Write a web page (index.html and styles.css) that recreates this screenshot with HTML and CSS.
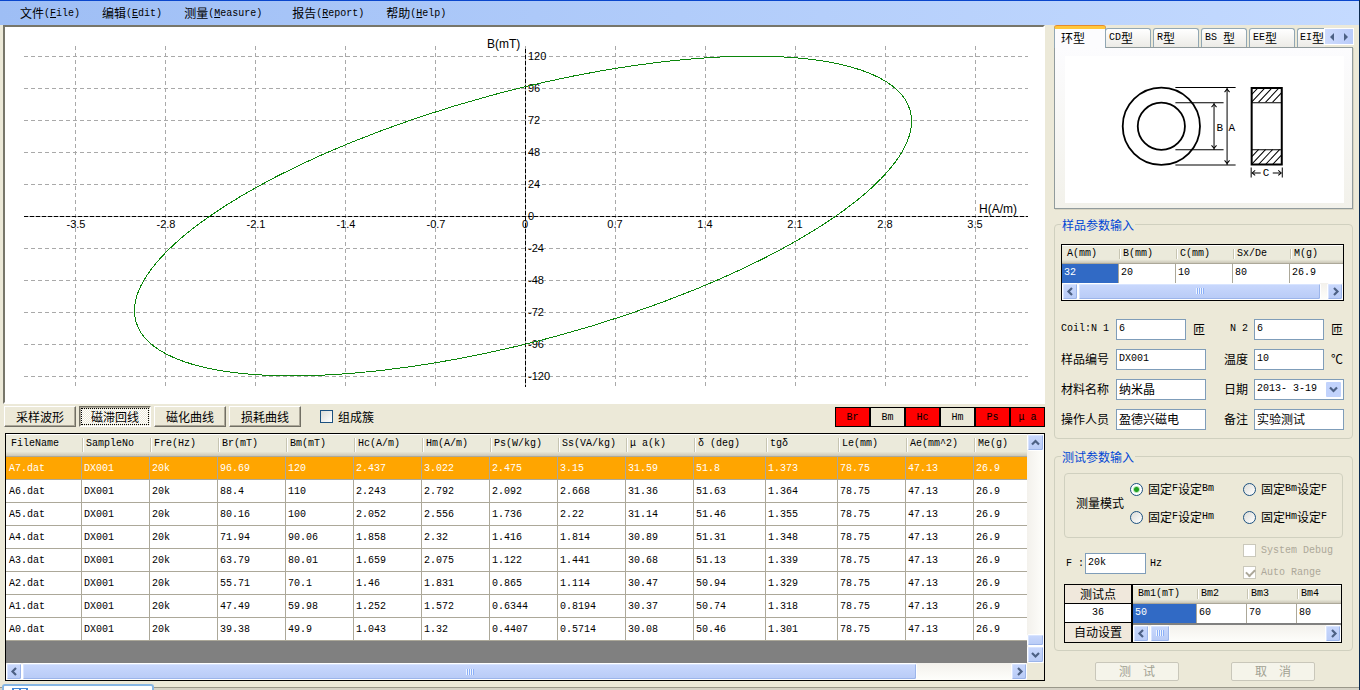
FILE: index.html
```html
<!DOCTYPE html>
<html lang="zh-CN">
<head>
<meta charset="utf-8">
<title>磁滞回线</title>
<link rel="stylesheet" href="styles.css">
</head>
<body>
<svg class="defs" aria-hidden="true">
  <symbol id="left" viewBox="0 0 9 9"><path d="M6 1 2.5 4.500 6 8" fill="none" stroke="#4d6185" stroke-width="2.200"/></symbol>
  <symbol id="right" viewBox="0 0 9 9"><path d="M3 1 6.500 4.500 3 8" fill="none" stroke="#4d6185" stroke-width="2.200"/></symbol>
  <symbol id="up" viewBox="0 0 9 9"><path d="M1 6.500 4.500 3 8 6.500" fill="none" stroke="#4d6185" stroke-width="2.200"/></symbol>
  <symbol id="down" viewBox="0 0 9 9"><path d="M1 3 4.500 6.500 8 3" fill="none" stroke="#4d6185" stroke-width="2.200"/></symbol>
  <symbol id="grip" viewBox="0 0 8 6"><path d="M.5 0v6M2.500 0v6M4.500 0v6M6.500 0v6" stroke="#eef4fe"/><path d="M1.500 0v6M3.500 0v6M5.500 0v6M7.500 0v6" stroke="#8cb0f8"/></symbol>
</svg>
<div class="window">
  <nav class="menubar">
    <button>文件<span>(<u>F</u>ile)</span></button>
    <button>编辑<span>(<u>E</u>dit)</span></button>
    <button class="wide">测量<span>(<u>M</u>easure)</span></button>
    <button>报告<span>(<u>R</u>eport)</span></button>
    <button>帮助<span>(<u>H</u>elp)</span></button>
  </nav>
  <div class="body">
    <main class="left">
      <div class="chart">
        <svg viewBox="5 27 1038 375" role="img" aria-label="B-H">
          <g class="grid">
            <path d="M24 56.500H1028M24 88.500H1028M24 120.500H1028M24 152.500H1028M24 184.500H1028M24 248.500H1028M24 280.500H1028M24 312.500H1028M24 344.500H1028M24 376.500H1028"/>
            <path d="M75.500 46V386M165.500 46V386M255.500 46V386M345.500 46V386M435.500 46V386M615.500 46V386M705.500 46V386M795.500 46V386M885.500 46V386M975.500 46V386"/>
            <path d="M24 216.500H1028M525.500 46V386" class="under"/>
          </g>
          <path class="axis" d="M24 216.500H1028M525.500 49V387"/>
          <g class="ticks">
            <text x="528" y="60">120</text><text x="528" y="92">96</text><text x="528" y="124">72</text><text x="528" y="156">48</text><text x="528" y="188">24</text><text x="528" y="220">0</text><text x="528" y="252">-24</text><text x="528" y="284">-48</text><text x="528" y="316">-72</text><text x="528" y="348">-96</text><text x="528" y="380">-120</text>
          </g>
          <g class="ticks mid">
            <text x="76" y="228">-3.5</text><text x="166" y="228">-2.8</text><text x="256" y="228">-2.1</text><text x="346" y="228">-1.4</text><text x="436" y="228">-0.7</text><text x="525" y="228">0</text><text x="615" y="228">0.7</text><text x="705" y="228">1.4</text><text x="795" y="228">2.1</text><text x="885" y="228">2.8</text><text x="975" y="228">3.5</text>
          </g>
          <text class="name" x="487" y="48">B(mT)</text>
          <text class="name" x="979" y="213">H(A/m)</text>
          <ellipse class="loop" cx="523" cy="216" rx="401.200" ry="124.700" transform="rotate(-15.210 523 216)"/>
        </svg>
      </div>
      <div class="toolbar">
        <button>采样波形</button><button class="pressed">磁滞回线</button><button>磁化曲线</button><button>损耗曲线</button>
        <label class="check cluster"><input type="checkbox">组成簇</label>
        <div class="legend"><button class="on">Br</button><button>Bm</button><button class="on">Hc</button><button>Hm</button><button class="on">Ps</button><button class="on">μ a</button></div>
      </div>
      <div class="datagrid">
        <div class="rows">
          <table>
            <colgroup><col class="c76"><col span="9" class="c68"><col span="2" class="c72"><col span="2" class="c68"><col></colgroup>
            <thead><tr><th>FileName</th><th>SampleNo</th><th>Fre(Hz)</th><th>Br(mT)</th><th>Bm(mT)</th><th>Hc(A/m)</th><th>Hm(A/m)</th><th>Ps(W/kg)</th><th>Ss(VA/kg)</th><th>μ a(k)</th><th>δ (deg)</th><th>tgδ</th><th>Le(mm)</th><th>Ae(mm^2)</th><th>Me(g)</th></tr></thead>
            <tbody>
              <tr class="selected"><td>A7.dat</td><td>DX001</td><td>20k</td><td>96.69</td><td>120</td><td>2.437</td><td>3.022</td><td>2.475</td><td>3.15</td><td>31.59</td><td>51.8</td><td>1.373</td><td>78.75</td><td>47.13</td><td>26.9</td></tr>
              <tr><td>A6.dat</td><td>DX001</td><td>20k</td><td>88.4</td><td>110</td><td>2.243</td><td>2.792</td><td>2.092</td><td>2.668</td><td>31.36</td><td>51.63</td><td>1.364</td><td>78.75</td><td>47.13</td><td>26.9</td></tr>
              <tr><td>A5.dat</td><td>DX001</td><td>20k</td><td>80.16</td><td>100</td><td>2.052</td><td>2.556</td><td>1.736</td><td>2.22</td><td>31.14</td><td>51.46</td><td>1.355</td><td>78.75</td><td>47.13</td><td>26.9</td></tr>
              <tr><td>A4.dat</td><td>DX001</td><td>20k</td><td>71.94</td><td>90.06</td><td>1.858</td><td>2.32</td><td>1.416</td><td>1.814</td><td>30.89</td><td>51.31</td><td>1.348</td><td>78.75</td><td>47.13</td><td>26.9</td></tr>
              <tr><td>A3.dat</td><td>DX001</td><td>20k</td><td>63.79</td><td>80.01</td><td>1.659</td><td>2.075</td><td>1.122</td><td>1.441</td><td>30.68</td><td>51.13</td><td>1.339</td><td>78.75</td><td>47.13</td><td>26.9</td></tr>
              <tr><td>A2.dat</td><td>DX001</td><td>20k</td><td>55.71</td><td>70.1</td><td>1.46</td><td>1.831</td><td>0.865</td><td>1.114</td><td>30.47</td><td>50.94</td><td>1.329</td><td>78.75</td><td>47.13</td><td>26.9</td></tr>
              <tr><td>A1.dat</td><td>DX001</td><td>20k</td><td>47.49</td><td>59.98</td><td>1.252</td><td>1.572</td><td>0.6344</td><td>0.8194</td><td>30.37</td><td>50.74</td><td>1.318</td><td>78.75</td><td>47.13</td><td>26.9</td></tr>
              <tr><td>A0.dat</td><td>DX001</td><td>20k</td><td>39.38</td><td>49.9</td><td>1.043</td><td>1.32</td><td>0.4407</td><td>0.5714</td><td>30.08</td><td>50.46</td><td>1.301</td><td>78.75</td><td>47.13</td><td>26.9</td></tr>
            </tbody>
          </table>
        </div>
        <div class="bar vertical"><button class="knob" aria-label="上"><svg><use href="#up"/></svg></button><span class="space"></span><span class="knob small"></span><button class="knob" aria-label="下"><svg><use href="#down"/></svg></button></div>
        <div class="bar"><button class="knob" aria-label="左"><svg><use href="#left"/></svg></button><span class="knob thumb most"><svg class="grip"><use href="#grip"/></svg></span><span class="space"></span><button class="knob" aria-label="右"><svg><use href="#right"/></svg></button></div>
      </div>
    </main>
    <aside class="side">
      <div class="tabs">
        <button class="active">环型</button><button><span>CD</span>型</button><button><span>R</span>型</button><button><span>BS </span>型</button><button><span>EE</span>型</button><button class="cut"><span>EI</span>型</button>
        <div class="spin"><button aria-label="前"><svg viewBox="0 0 6 8"><path d="M5 0v8L1 4z" fill="#4d6185"/></svg></button><button aria-label="后"><svg viewBox="0 0 6 8"><path d="M1 0v8l4-4z" fill="#4d6185"/></svg></button></div>
      </div>
      <div class="page">
        <svg viewBox="1065 56 278 146" role="img" aria-label="环型">
          <defs><clipPath id="hatch"><path d="M1251 88h30v14h-30zM1251 149h30v15h-30z"/></clipPath></defs>
          <g fill="none" stroke="#000">
            <circle cx="1161" cy="126" r="38.500" stroke-width="1.800"/>
            <circle cx="1161" cy="126" r="23.500" stroke-width="1.800"/>
            <path d="M1175 87.500h60M1175 102.500h48M1175 149.500h48M1175 164.500h60M1213.500 103v46M1226.500 88v76M1250.500 167v10M1281.500 167v10M1252 172.500h8M1272 172.500h8"/>
            <path d="M1211 107l2.500-3 2.500 3M1211 145l2.500 3 2.500-3M1224 92l2.500-3 2.500 3M1224 160l2.500 3 2.500-3M1254.500 170l-3 2.500 3 2.500M1277.500 170l3 2.500-3 2.500"/>
            <path d="M1251 88h30v76h-30z" stroke-width="2"/>
            <path d="M1251 102.500h30M1251 149.500h30"/>
            <path clip-path="url(#hatch)" d="M1243 103l15-16M1250 103l15-16M1257 103l15-16M1264 103l15-16M1271 103l15-16M1243 165l15-16M1250 165l15-16M1257 165l15-16M1264 165l15-16M1271 165l15-16"/>
          </g>
          <g class="dims"><text x="1216" y="131">B</text><text x="1228" y="131">A</text><text x="1262" y="176">C</text></g>
        </svg>
      </div>

      <fieldset class="sample">
        <legend>样品参数输入</legend>
        <div class="minigrid">
          <table>
            <colgroup><col span="4" class="c57"><col></colgroup>
            <thead><tr><th>A(mm)</th><th>B(mm)</th><th>C(mm)</th><th>Sx/De</th><th>M(g)</th></tr></thead>
            <tbody><tr><td class="cell">32</td><td>20</td><td>10</td><td>80</td><td>26.9</td></tr></tbody>
          </table>
          <div class="bar"><button class="knob" aria-label="左"><svg><use href="#left"/></svg></button><span class="knob thumb fill"><svg class="grip"><use href="#grip"/></svg></span><span class="stub"></span><button class="knob" aria-label="右"><svg><use href="#right"/></svg></button></div>
        </div>
        <div class="form">
          <label class="en" for="n1">Coil:N 1</label><div class="field"><input id="n1" class="short" value="6"><span>匝</span></div>
          <label class="en" for="n2">N 2</label><div class="field"><input id="n2" class="short" value="6"><span>匝</span></div>
          <label for="no">样品编号</label><div class="field"><input id="no" value="DX001"></div>
          <label for="temp">温度</label><div class="field"><input id="temp" class="short" value="10"><span>℃</span></div>
          <label for="mat">材料名称</label><div class="field"><input id="mat" class="cn" value="纳米晶"></div>
          <label for="date">日期</label><div class="field date"><select id="date"><option>2013- 3-19</option></select><svg viewBox="0 0 15 15"><rect width="15" height="15" rx="1" fill="#c2d3fc"/><path d="M4 5.500 7.500 9 11 5.500" fill="none" stroke="#4d6185" stroke-width="2.200"/></svg></div>
          <label for="op">操作人员</label><div class="field"><input id="op" class="cn" value="盈德兴磁电"></div>
          <label for="note">备注</label><div class="field"><input id="note" class="cn" value="实验测试"></div>
        </div>
      </fieldset>

      <fieldset class="test">
        <legend>测试参数输入</legend>
        <div class="mode" role="radiogroup" aria-labelledby="mode">
          <span id="mode">测量模式</span>
          <div class="radios">
            <label><input type="radio" name="m" checked>固定<span>F</span>设定<span>Bm</span></label>
            <label><input type="radio" name="m">固定<span>Bm</span>设定<span>F</span></label>
            <label><input type="radio" name="m">固定<span>F</span>设定<span>Hm</span></label>
            <label><input type="radio" name="m">固定<span>Hm</span>设定<span>F</span></label>
          </div>
        </div>
        <div class="options">
          <label class="en" for="freq">F :</label><input id="freq" value="20k"><span class="en">Hz</span>
          <div class="flags">
            <label class="check off"><input type="checkbox" disabled><span>System Debug</span></label>
            <label class="check off"><input type="checkbox" checked disabled><span>Auto Range</span></label>
          </div>
        </div>
        <div class="points">
          <div class="setup"><span>测试点</span><span class="count">36</span><button>自动设置</button></div>
          <div class="series">
            <table>
              <colgroup><col class="c63"><col span="2" class="c50"><col></colgroup>
              <thead><tr><th>Bm1(mT)</th><th>Bm2</th><th>Bm3</th><th>Bm4</th></tr></thead>
              <tbody><tr><td class="cell">50</td><td>60</td><td>70</td><td>80</td></tr></tbody>
            </table>
            <div class="bar"><button class="knob" aria-label="左"><svg><use href="#left"/></svg></button><span class="knob thumb tiny"><svg class="grip"><use href="#grip"/></svg></span><span class="space"></span><button class="knob" aria-label="右"><svg><use href="#right"/></svg></button></div>
          </div>
        </div>
      </fieldset>
      <div class="actions"><button disabled>测　试</button><button disabled>取　消</button></div>
    </aside>
  </div>
  <footer class="taskbar"><div class="task"><svg viewBox="0 0 16 3"><path d="M0 0h16v3H0z" fill="#3f86d6"/><path d="M2 1h5v2H2zM9 1h5v2H9z" fill="#fff"/></svg></div></footer>
</div>
</body>
</html>
```

FILE: styles.css
```css
:root {
  --cjk: "Noto Sans CJK SC", sans-serif;
  --mono: "Liberation Mono", "Noto Sans CJK SC", monospace;
  --face: #ece9d8;
  --line: #aca899;
  --group: #d0d0bf;
  --field: #7f9db9;
}

* { box-sizing: border-box; }

body {
  margin: 0;
  background: var(--face);
  font: 12px/16px var(--cjk);
  color: #000;
}

button, input, select {
  margin: 0;
  padding: 0;
  border: 0;
  background: none;
  font: inherit;
  color: inherit;
}

.defs { position: absolute; width: 0; height: 0; }

.window {
  display: flex;
  flex-direction: column;
  height: 100vh;
  min-height: 690px;
  overflow: hidden;
  border-right: 1px solid #0a2a50;
}

/* Menu */
.menubar {
  display: flex;
  flex: none;
  gap: 22px;
  height: 25px;
  padding: 0 20px;
  border-top: 1px solid #0a46cc;
  background: linear-gradient(90deg, #9ebef5, #c4daff);
}
.menubar button { display: flex; align-items: center; }
.menubar button > span { padding-top: 2px; }
.menubar .wide { margin-right: 8px; }
.menubar span, .tabs span, .radios span, .check span, .en {
  font-family: var(--mono);
  font-size: 10px;
}

.body { display: flex; flex: 1; min-height: 0; padding: 0 6px 0 3px; gap: 9px; }
.left { flex: 1; min-width: 0; display: flex; flex-direction: column; }
.side { flex: none; width: 299px; padding-top: 1px; }

/* Plot */
.chart {
  border: 2px solid;
  border-color: #77766a #fff #fff #77766a;
  background: #fff;
}
.chart svg { display: block; width: 100%; height: auto; }
.grid path { fill: none; stroke: #a9a9a9; stroke-dasharray: 4 3; shape-rendering: crispEdges; }
.grid .under { stroke-dasharray: none; }
.axis { fill: none; stroke: #000; stroke-dasharray: 4 2; shape-rendering: crispEdges; }
.ticks, .name { font-family: "Liberation Sans", Arial, sans-serif; font-size: 11px; fill: #000; }
.name { font-size: 12px; }
.mid { text-anchor: middle; }
.loop { fill: none; stroke: #0b860b; stroke-width: 1; shape-rendering: crispEdges; }

/* Buttons under the plot */
.toolbar { display: flex; align-items: center; gap: 3px; height: 29px; padding-left: 1px; }
.toolbar > button {
  width: 72px;
  height: 21px;
  margin-bottom: 4px;
  border: 1px solid;
  border-color: #fff #716f64 #716f64 #fff;
  box-shadow: inset -1px -1px var(--line);
  line-height: 17px;
}
.toolbar .pressed {
  background: repeating-conic-gradient(#fff 0 25%, #ece9d8 0 50%) 0 0 / 2px 2px;
  border-color: #716f64 #fff #fff #716f64;
  box-shadow: inset 1px 1px var(--line);
  outline: 1px dotted #000;
  outline-offset: -3px;
  line-height: 15px;
}
.check { display: flex; align-items: center; gap: 5px; }
.check input, .radios input {
  appearance: none;
  flex: none;
  width: 13px;
  height: 13px;
  border: 1px solid #1c5180;
  background: linear-gradient(135deg, #dcdcd7, #fff);
}
.cluster { margin: 0 0 4px 16px; }
.legend { display: flex; margin: 0 0 4px auto; }
.legend button {
  width: 35px;
  height: 20px;
  margin-top: 1px;
  padding-top: 2px;
  border: 1px solid #000;
  font: 10px/14px var(--mono);
}
.legend .on { background: #f00; }

/* Tables */
table { width: 100%; border-collapse: separate; border-spacing: 0; table-layout: fixed; font: 10px/14px var(--mono); }
.c76 { width: 76px; }
.c72 { width: 72px; }
.c68 { width: 68px; }
.c63 { width: 64px; }
.c57 { width: 57px; }
.c50 { width: 50px; }
th, td { overflow: hidden; white-space: nowrap; text-align: left; font-weight: normal; }
th {
  position: relative;
  height: 19px;
  padding: 0 0 0 5px;
  border-bottom: 1px solid var(--line);
  background: linear-gradient(#fff 0 1px, #ebeadb 1px 80%, #cbc7b8);
}
th + th { padding-left: 4px; }
th + th::before {
  content: "";
  position: absolute;
  left: 0;
  top: 4px;
  bottom: 4px;
  width: 2px;
  background: linear-gradient(90deg, #c7c5b2 50%, #fff 50%);
}
td { height: 19px; padding: 0 0 0 2px; border-right: 1px solid var(--line); background: #fff; }
td:last-child { border-right: 0; }
td.cell { background: #316ac5; color: #fff; }

.datagrid {
  display: grid;
  flex: 1;
  grid-template: minmax(0, 1fr) 17px / minmax(0, 1fr) 17px;
  min-height: 0;
  margin: 0 0 0 2px;
  border: 1px solid #000;
}
.rows { background: #808080; overflow: hidden; }
.rows th { height: 23px; padding-bottom: 2px; }
.rows td { height: 23px; padding-top: 1px; border-bottom: 1px solid var(--line); }
.rows td:first-child { padding-left: 3px; }
.selected td { background: #ffa500; color: #fff; }

/* Scroll bars */
.bar { display: flex; height: 17px; background: linear-gradient(#f3f1ec, #fefefb); }
.vertical { flex-direction: column; width: 17px; height: auto; background: linear-gradient(90deg, #f3f1ec, #fefefb); }
.knob {
  display: flex;
  flex: none;
  align-items: center;
  justify-content: center;
  width: 16px;
  height: 17px;
  border: 1px solid #fff;
  border-radius: 2px;
  background: linear-gradient(#c9d8fd, #b8cbf6);
  box-shadow: inset -1px -1px #9cb5ea, inset 1px 1px #d8e4ff;
}
.vertical .knob { width: 17px; }
.knob svg { width: 9px; height: 9px; }
.knob .grip { width: 8px; height: 6px; }
.vertical .small { height: 12px; }
.most { width: 895px; flex-shrink: 1; }
.fill, .space { flex: 1; }
.tiny { width: 20px; margin-left: 1px; }
.stub { width: 6px; }

/* Core shape tabs */
.tabs { display: flex; align-items: flex-end; height: 21px; position: relative; }
.tabs > button {
  display: flex;
  align-items: center;
  flex: none;
  width: 46px;
  height: 19px;
  margin-right: 2px;
  padding-left: 3px;
  border: 1px solid #91a7b4;
  border-bottom: 0;
  border-radius: 3px 3px 0 0;
  background: linear-gradient(#fff, #ecebe6);
  white-space: pre;
}
.tabs > .active {
  width: 52px;
  height: 22px;
  margin: 0 -1px -1px 0;
  padding: 0 0 2px 6px;
  border-top: 3px solid #ffc73c;
  box-shadow: 0 -1px #e68b2c;
  background: #fcfcfe;
  z-index: 1;
}
.tabs > .cut { width: 28px; margin: 0; padding-left: 2px; border-right: 0; border-radius: 3px 0 0 0; }
.spin { display: flex; flex: 1; height: 15px; margin: 0 0 3px; background: linear-gradient(90deg, #cfdcfd, #b9cbfa); box-shadow: 0 0 0 1px #fff; }
.spin button { display: flex; flex: 1; align-items: center; justify-content: center; }
.spin svg { width: 6px; height: 8px; }
.page {
  padding: 8px 8px 5px 10px;
  border: 1px solid #919b9c;
  background: linear-gradient(#fcfcfe, #f2f1ea);
  box-shadow: 1px 1px #d6d3c2;
}
.page svg { display: block; width: 100%; height: auto; background: #fff; }
.dims { font: 11px "Liberation Mono", monospace; }

/* Groups */
fieldset {
  min-width: 0;
  margin: 0;
  padding: 0 8px 0 6px;
  border: 1px solid var(--group);
  border-radius: 4px;
}
legend { padding: 0 1px; color: #0046d5; }
.sample { margin-top: 8px; padding-bottom: 8px; }
.test { margin-top: 10px; padding: 0 9px 7px; }
.test legend { margin-left: -3px; }
.minigrid { margin: 11px 0 18px; border: 1px solid #000; }

.form { display: grid; grid-template-columns: 55px 90px 1fr 90px; row-gap: 9px; align-items: center; }
.form label { white-space: nowrap; }
.form label:nth-of-type(even) { justify-self: end; margin-right: 6px; }
.field { position: relative; display: flex; align-items: center; gap: 7px; height: 21px; }
.field input, .field select, .options > input {
  width: 90px;
  height: 21px;
  padding: 0 0 2px 2px;
  border: 1px solid var(--field);
  background: #fff;
  font: 10px/14px var(--mono);
}
.field .short { width: 70px; flex: none; }
.field .cn { font: 12px/16px var(--cjk); }
.field select { appearance: none; padding-bottom: 0; }
.date svg { position: absolute; right: 3px; top: 3px; width: 15px; height: 15px; pointer-events: none; }

.mode {
  display: flex;
  align-items: center;
  height: 65px;
  margin-top: 8px;
  padding: 0 0 4px 11px;
  border: 1px solid var(--group);
  border-radius: 4px;
}
.radios { display: grid; grid-template-columns: 113px 1fr; row-gap: 12px; margin-left: 6px; flex: 1; }
.radios label { display: flex; align-items: center; white-space: nowrap; }
.radios input { margin-right: 5px; border-radius: 50%; }
.radios input:checked { background: radial-gradient(circle, #21a121 0 2px, #b9e6b9 3px, #fff 4px); }

.options { display: flex; align-items: center; height: 46px; }
.options > label { width: 21px; padding-left: 2px; white-space: nowrap; }
.options > input { width: 61px; margin-top: 6px; }
.options > span { margin-left: 4px; }
.options > .en { padding-top: 6px; }
.flags { display: grid; gap: 6px; margin-left: auto; padding: 2px 10px 0 0; }
.off { color: #aca899; }
.off input { border-color: #cac8bb; background: #fff; }
.off input:checked { background: linear-gradient(#fff, #fff); position: relative; }
.off input:checked::after {
  content: "";
  position: absolute;
  left: 2px;
  top: 2px;
  width: 7px;
  height: 4px;
  border: solid #aca899;
  border-width: 0 0 2px 2px;
  transform: rotate(-45deg);
}

.points { display: flex; margin-right: 1px; border: 1px solid #000; }
.setup { flex: none; width: 67px; border-right: 1px solid #000; text-align: center; display: grid; grid-template-rows: 19px 19px 19px; line-height: 18px; }
.setup > span { border-bottom: 1px solid #000; background: #f0e8dc; }
.setup > .count { background: #fff; font: 10px/17px var(--mono); }
.setup button { background: #f0e8dc; }
.series { flex: 1; min-width: 0; border-left: 1px solid #000; background: #808080; }
.series .bar { margin-top: 2px; }

.actions { display: flex; gap: 52px; margin: 11px 0 0 41px; }
.actions button { width: 84px; height: 19px; border: 1px solid #c9c7ba; border-radius: 2px; background: #f5f4ea; color: #a1a192; line-height: 16px; }

.taskbar { flex: none; height: 9px; padding: 3px 0 0 2px; background: linear-gradient(var(--face) 0 6px, #9a988a 6px 7px, #d6d3c6 7px); }
.task { width: 152px; height: 6px; padding: 2px 8px 0; border: 2px solid #86b6e4; border-bottom: 0; border-radius: 3px 3px 0 0; background: #fff; }
.task svg { display: block; width: 16px; height: 3px; }
```
